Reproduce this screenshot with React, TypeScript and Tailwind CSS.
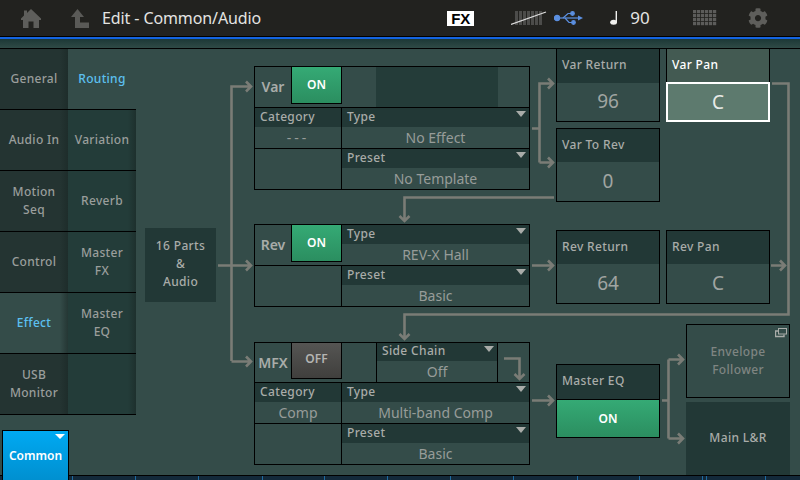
import { FaCog } from "react-icons/fa";

const tabsLeft = [
  { label: ["General"] },
  { label: ["Audio In"] },
  { label: ["Motion", "Seq"] },
  { label: ["Control"] },
  { label: ["Effect"], active: true },
  { label: ["USB", "Monitor"] },
];

const tabsRight = [
  { label: ["Routing"], active: true },
  { label: ["Variation"] },
  { label: ["Reverb"] },
  { label: ["Master", "FX"] },
  { label: ["Master", "EQ"] },
  { label: [] as string[] },
];

const ticks = [9, 72, 135, 198, 262, 324, 387, 450, 513, 577, 639, 702, 706, 765];

function Arrow() {
  return <span className="absolute top-[3px] right-[3px] w-0 h-0 border-x-[5px] border-x-transparent border-t-[6px] border-t-[#a9aca9]" />;
}

function Param({ label, value, wide }: { label: string; value: string; wide?: boolean }) {
  return (
    <div className={wide ? "w-[187px] h-10" : "w-[86px] h-10"}>
      <div className="relative h-[19px] bg-[#223836] pl-[5px] text-[12px] leading-[17px] font-medium tracking-[0.35px] text-[#a9aca9]">
        {label}
        {wide && <Arrow />}
      </div>
      <div className={"h-[21px] text-center text-[14px] leading-[21px] text-[#979c99] " + (value === "---" ? "tracking-[3px]" : "")}>{value}</div>
    </div>
  );
}

function Switch({ on, label }: { on?: boolean; label: string }) {
  return (
    <div
      className={
        "w-[51px] flex items-center justify-center border-x border-b border-black text-[12px] font-semibold " +
        (on ? "h-[37px] bg-gradient-to-b from-[#35aa75] to-[#2b8e60] text-white" : "h-[36px] pb-[3px] bg-gradient-to-b from-[#555553] to-[#403f3d] text-[#b4b4b2]")
      }
    >
      {label}
    </div>
  );
}

function Title({ children }: { children: string }) {
  return <div className="w-9 pt-[10px] text-center text-[14px] leading-[20px] font-semibold text-[#a9aca9]">{children}</div>;
}

function Knob({ label, value, selected, top }: { label: string; value: string; selected?: boolean; top?: boolean }) {
  return (
    <div className={"w-[104px] border-x border-b border-black flex flex-col " + (top ? "h-[73px]" : "h-[74px] border-t")}>
      <div className={"h-[34px] pl-[5px] text-[12px] leading-[32px] font-medium tracking-[0.35px] " + (selected ? "bg-[#435a52] text-white" : "bg-[#223836] text-[#a9aca9]")}>
        {label}
      </div>
      {selected ? (
        <div className="-mx-px -mb-px h-[40px] border-2 border-white bg-[#5d7a6e] text-center text-[19px] leading-[36px] text-[#e8ebe8]">{value}</div>
      ) : (
        <div className={"flex-1 text-center text-[19px] text-[#a0a5a2] " + (top ? "leading-[37px]" : "leading-[39px]")}>{value}</div>
      )}
    </div>
  );
}

function Tab({ label, active, col }: { label: string[]; active?: boolean; col: number }) {
  const base = col === 0 ? "bg-[#243432]" : "bg-[#233c39]";
  return (
    <div className={"relative h-[61px] border-b border-black flex flex-col items-center justify-center text-[12px] leading-[18px] font-medium tracking-[0.3px] " + (active ? "bg-[#344c49] text-[#5cc0f0]" : base + " text-[#9a9e9c]")}>
      {label.map((t) => (
        <span key={t}>{t}</span>
      ))}
      {!(active && col === 1) && <span className="absolute top-0 bottom-0 right-0 w-2 bg-gradient-to-r from-transparent to-[#1a2826]/60" />}
    </div>
  );
}

function Wires() {
  const head = (x: number, y: number) => `M${x - 5} ${y - 5}L${x} ${y}L${x - 5} ${y + 5}`;
  const down = (x: number, y: number) => `M${x - 5} ${y - 5}L${x} ${y}L${x + 5} ${y - 5}`;
  const d = [
    "M218 265.5H231.5", "M231.5 361V86.5H250", head(251, 86.5),
    "M231.5 361.5H250", head(251, 361.5), "M218 265.5H250", head(251, 265.5),
    "M532 128.5H539.5", "M539.5 162.5V83.5H552", head(553, 83.5), "M539.5 162.5H552", head(553, 162.5),
    "M554 197.5H404.5V220", down(404.5, 221),
    "M532 265.5H552", head(553, 265.5),
    "M772 83.5H788.5V314.5H404.5V338", down(404.5, 339),
    "M771 265.5H784", head(785, 265.5),
    "M504 358.5H519.5V378", down(519.5, 379),
    "M532 400.5H552", head(553, 400.5),
    "M662 400.5H668.5", "M668.5 359.5V438.5", "M668.5 359.5H682", head(683, 359.5), "M668.5 438.5H682", head(683, 438.5),
  ].join(" ");
  return (
    <svg className="absolute left-0 top-0 pointer-events-none" width="800" height="480" fill="none">
      <path d={d} stroke="#7a7c76" strokeWidth="2.6" />
    </svg>
  );
}

function Meter() {
  return (
    <svg width="36" height="16" viewBox="0 0 36 16">
      {[4, 8, 12, 16, 20, 24, 28].map((x) => (
        <rect key={x} x={x} y="1" width="3" height="14" fill="#4c4c4a" />
      ))}
      <path d="M0 14.5L35 2" stroke="#dcdcdc" strokeWidth="1.2" />
    </svg>
  );
}

function Usb() {
  return (
    <svg width="29" height="14" viewBox="0 0 29 14" fill="none" stroke="#5b8fe0" strokeWidth="1.2">
      <circle cx="3" cy="7" r="2.6" fill="#5b8fe0" />
      <path d="M3 7H26" />
      <path d="M9 7L14 2.5H18" />
      <path d="M11 7L15 11.5H19" />
      <circle cx="18.5" cy="2.5" r="1.8" fill="#5b8fe0" />
      <circle cx="19.5" cy="11.5" r="1.8" fill="#5b8fe0" />
      <path d="M24 4.5L29 7L24 9.5Z" fill="#5b8fe0" stroke="none" />
    </svg>
  );
}

function Grid() {
  return (
    <svg width="24" height="16" viewBox="0 0 24 16" fill="#5c5c5a">
      {[0, 4, 8, 12].map((y) => [0, 4, 8, 12, 16, 20].map((x) => <rect key={x + "-" + y} x={x} y={y} width="3.2" height="3.2" />))}
    </svg>
  );
}

export default function App() {
  return (
    <div className="relative w-[800px] h-[480px] overflow-hidden bg-[#344c49] font-['Noto_Sans',sans-serif]">
      <header className="flex items-center h-[37px] bg-[#22221f] border-b border-black">
        <svg className="ml-[21px]" width="20" height="19" viewBox="0 0 20 19" fill="#5e5e5b">
          <path d="M10 0L20 9.5V11H18V19H12.5V12.5H7.5V19H2V11H0V9.5L3 6.6V1.5H6V3.9Z" />
        </svg>
        <svg className="ml-[30px]" width="18" height="19" viewBox="0 0 18 19" fill="#5a5a57">
          <path d="M6.5 0L13 8H9V13.5H18V19H4V8H0Z" />
        </svg>
        <span className="ml-[13px] text-[16px] tracking-[-0.1px] text-[#e4e4e2]">Edit - Common/Audio</span>
        <span className="ml-[186px] w-[27px] h-[15px] bg-white text-black text-[15px] leading-[15px] font-bold text-center font-['Liberation_Sans',sans-serif]">FX</span>
        <span className="ml-[37px]"><Meter /></span>
        <span className="ml-[7px]"><Usb /></span>
        <svg className="ml-[27px]" width="9" height="14" viewBox="0 0 9 14">
          <ellipse cx="3.6" cy="11.3" rx="3.4" ry="2.5" fill="#f0f0ee" />
          <rect x="5.6" y="0" width="1.4" height="11" fill="#f0f0ee" />
        </svg>
        <span className="ml-[11px] text-[17px] text-[#e4e4e2]">90</span>
        <span className="ml-[43px]"><Grid /></span>
        <FaCog className="ml-[31px] text-[20px] text-[#5e5e5b]" />
      </header>

      <div className="h-[2px] bg-[#1464e0]" />
      <div className="h-[9px] bg-gradient-to-b from-[#1c3836] to-[#2f4a46]" />

      <main className="relative flex h-[432px] border-t border-black">
        <aside className="relative z-10 w-[136px] shrink-0">
          <div className="flex">
            <div className="w-[68px]">
              {tabsLeft.map((t) => (
                <Tab key={t.label[0]} label={t.label} active={t.active} col={0} />
              ))}
            </div>
            <div className="w-[68px]">
              {tabsRight.map((t, i) => (
                <Tab key={i} label={t.label} active={t.active} col={1} />
              ))}
            </div>
          </div>
          <div className="relative ml-[2px] mt-[15px] w-[67px] h-[50px] border border-b-0 border-black bg-gradient-to-b from-[#00a9f2] to-[#0090d0] text-center text-[12px] leading-[50px] font-semibold text-white">
            Common
            <span className="absolute top-[3px] right-[3px] w-0 h-0 border-x-[5px] border-x-transparent border-t-[5px] border-t-white" />
          </div>
        </aside>

        <section className="flex">
          <div className="ml-[9px] mt-[179px] w-[71px] h-[74px] pb-[2px] bg-[#223836] flex flex-col items-center justify-center text-[12px] leading-[18px] font-medium tracking-[0.35px] text-[#a9aca9]">
            <span>16 Parts</span>
            <span>&amp;</span>
            <span>Audio</span>
          </div>

          <div className="ml-[38px] w-[276px]">
            <div className="mt-[17px] border border-black">
              <div className="flex h-10">
                <Title>Var</Title>
                <Switch on label="ON" />
                <div className="ml-[34px] w-[122px] bg-[#243c39]" />
              </div>
              <div className="flex border-t border-black">
                <Param label="Category" value="---" />
                <div className="border-l border-black"><Param wide label="Type" value="No Effect" /></div>
              </div>
              <div className="flex border-t border-black">
                <div className="w-[86px]" />
                <div className="border-l border-black"><Param wide label="Preset" value="No Template" /></div>
              </div>
            </div>

            <div className="mt-[34px] border border-black">
              <div className="flex">
                <Title>Rev</Title>
                <Switch on label="ON" />
                <Param wide label="Type" value="REV-X Hall" />
              </div>
              <div className="flex border-t border-black">
                <div className="w-[86px]" />
                <div className="border-l border-black"><Param wide label="Preset" value="Basic" /></div>
              </div>
            </div>

            <div className="mt-[35px] border border-black">
              <div className="flex h-[39px]">
                <Title>MFX</Title>
                <Switch label="OFF" />
                <div className="ml-[34px] w-[122px] border-x border-black">
                  <div className="relative h-[18px] bg-[#223836] pl-[5px] text-[12px] leading-[16px] font-medium tracking-[0.35px] text-[#a9aca9]">
                    Side Chain
                    <Arrow />
                  </div>
                  <div className="text-center text-[14px] leading-[22px] text-[#979c99]">Off</div>
                </div>
              </div>
              <div className="flex border-t border-black">
                <Param label="Category" value="Comp" />
                <div className="border-l border-black"><Param wide label="Type" value="Multi-band Comp" /></div>
              </div>
              <div className="flex border-t border-black">
                <div className="w-[86px]" />
                <div className="border-l border-black"><Param wide label="Preset" value="Basic" /></div>
              </div>
            </div>
          </div>

          <div className="ml-[26px] w-[234px]">
            <div className="flex gap-[6px]">
              <Knob top label="Var Return" value="96" />
              <Knob top selected label="Var Pan" value="C" />
            </div>
            <div className="mt-[6px]">
              <Knob label="Var To Rev" value="0" />
            </div>
            <div className="mt-[28px] flex gap-[6px]">
              <Knob label="Rev Return" value="64" />
              <Knob label="Rev Pan" value="C" />
            </div>
            <div className="mt-[20px] flex justify-between">
              <div className="mt-[40px] w-[104px] h-[74px] border border-black">
                <div className="h-[34px] bg-[#223836] pl-[5px] text-[12px] leading-[31px] font-medium tracking-[0.35px] text-[#a9aca9]">Master EQ</div>
                <div className="h-[38px] border-t border-black bg-gradient-to-b from-[#35aa75] to-[#2b8e60] text-center text-[12px] leading-[37px] font-semibold text-white">ON</div>
              </div>
              <div className="w-[104px]">
                <div className="relative h-[74px] border border-black flex flex-col items-center justify-center text-[12px] leading-[18px] font-medium tracking-[0.35px] text-[#7f8582]">
                  <span>Envelope</span>
                  <span>Follower</span>
                  <svg className="absolute right-[2px] top-[3px]" width="12" height="10" viewBox="0 0 12 10" fill="none" stroke="#a9aca9">
                    <rect x="3.5" y="0.5" width="8" height="5.5" fill="#344c49" />
                    <path d="M3 3H0.5V8.5H9V6.5" strokeWidth="1.4" />
                  </svg>
                </div>
                <div className="mt-1 h-[73px] pb-[2px] bg-[#223836] flex items-center justify-center text-[12px] font-medium tracking-[0.35px] text-[#a9aca9]">Main L&amp;R</div>
              </div>
            </div>
          </div>
        </section>
      </main>

      <Wires />

      <footer className="absolute left-0 right-0 bottom-0 h-[5px] border-t border-black bg-[#13293a]">
        {ticks.map((x) => (
          <span key={x} className="absolute top-0 bottom-0 w-px bg-[#1f6aa0]" style={{ left: x }} />
        ))}
      </footer>
    </div>
  );
}
